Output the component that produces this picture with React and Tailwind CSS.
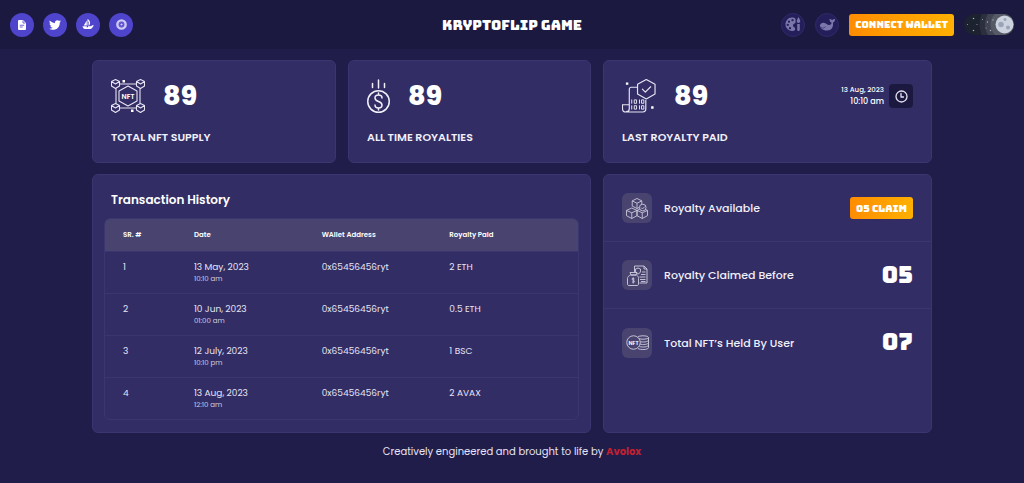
import React from "react";
import { FaTwitter } from "react-icons/fa";

function FileIcon() {
  return (
    <svg viewBox="0 0 16 20" className="h-[10px] w-2" aria-hidden="true">
      <path fill="#fff" d="M2 0h8l6 6v12a2 2 0 0 1-2 2H2a2 2 0 0 1-2-2V2a2 2 0 0 1 2-2z" />
      <path fill="none" stroke="#4f44cc" strokeWidth="1.600" d="M10 1v5h5M3.500 10.500h9M3.500 14h6" />
    </svg>
  );
}

function BoatIcon() {
  return (
    <svg viewBox="0 0 24 22" className="h-[11px] w-3" aria-hidden="true">
      <path fill="#fff" d="M11 0c5 3 7 8 3.500 13H11zM9.500 3v10H3.500zM1 14.500h8.500v2h2.500v-2h5c2 0 2.500-2 6-2.500v2c-2 1-2.500 6-6 6H6c-3 0-5-3-5-7.500z" />
      <path fill="none" stroke="#4f44cc" strokeWidth="1.200" d="M13 5v8" />
    </svg>
  );
}

function RingIcon() {
  return (
    <svg viewBox="0 0 20 20" className="size-[11px]" aria-hidden="true">
      <circle cx="10" cy="10" r="7.500" fill="none" stroke="#cfcaf5" strokeWidth="4.500" />
      <circle cx="10" cy="10" r="4.500" fill="none" stroke="#8f88e0" strokeWidth="1.500" strokeDasharray="2 1.500" />
      <circle cx="10" cy="10" r="2" fill="#d9d5f8" />
    </svg>
  );
}

function PaletteIcon() {
  return (
    <svg viewBox="0 0 32 30" className="h-[15px] w-4" aria-hidden="true">
      <path
        fill="#7c77ab"
        fillRule="evenodd"
        d="M14 1c3 0 5 1 7 2.500V12c-3 1-5 2-5 5 0 3 3 3 4 5s0 6-5 6C7 28 1 22 1 15S6 1 14 1zM8 7a2.300 2.300 0 1 0 0 4.600A2.300 2.300 0 0 0 8 7zM15 4a2.300 2.300 0 1 0 0 4.600A2.300 2.300 0 0 0 15 4zM5.500 13.500a2.300 2.300 0 1 0 0 4.600 2.300 2.300 0 0 0 0-4.600zM10 20a2.300 2.300 0 1 0 0 4.600A2.300 2.300 0 0 0 10 20z"
      />
      <path fill="#7c77ab" d="M27 0c2 4 3.500 6 3.500 8.500a3.500 3.500 0 0 1-7 0C23.500 6 25 4 27 0zM24.500 14h5v11c0 4-5 4-5 0z" />
    </svg>
  );
}

function WhaleIcon() {
  return (
    <svg viewBox="0 0 30 24" className="h-3 w-[15px]" aria-hidden="true">
      <path
        fill="#7c77ab"
        d="M23 7C20 6 19 3 19 0c3 0 4 1 5 3 1-2 3-3 6-3 0 3-1 6-4 7 1 10-3 16-12 16C5 23 0 18 0 12c2-4 6-5 9-4 5 1 6 5 10 4 3-1 4-2 4-5z"
      />
      <path fill="none" stroke="#241f5a" strokeWidth="1.200" d="M2 17c4 2 7 1 9-2" />
    </svg>
  );
}

function SupplyIcon() {
  return (
    <svg viewBox="0 0 68 68" className="size-[34px]" fill="none" stroke="#e6e4f4" strokeWidth="2.200" strokeLinejoin="round" aria-hidden="true">
      <path d="M18 10h32M18 58h32M10 19v30M58 19v30" />
      <path d="M34 14l18 10v20L34 54 16 44V24z" />
      <path d="M9 1l8 4v9l-8 5-8-5V5zM1 5l8 5 8-5" />
      <path d="M59 1l8 4v9l-8 5-8-5V5zM51 5l8 5 8-5" />
      <path d="M9 49l8 4v9l-8 5-8-5v-9zM1 53l8 5 8-5" />
      <path d="M59 49l8 4v9l-8 5-8-5v-9zM51 53l8 5 8-5" />
      <path fill="#fff" stroke="none" d="M23 2h5v5h-5zM40 61h5v5h-5z" />
      <text x="34" y="39" textAnchor="middle" fill="#fff" stroke="none" fontSize="14" fontWeight="600" fontFamily="Poppins, Inter, sans-serif">NFT</text>
    </svg>
  );
}

function CoinIcon() {
  return (
    <svg viewBox="0 0 46 68" className="h-[34px] w-[23px]" fill="none" stroke="#f1f0fa" strokeWidth="3" strokeLinecap="round" aria-hidden="true">
      <circle cx="23" cy="45" r="21.500" />
      <path d="M23 2v16M11 9v8M35 9v8" />
      <path d="M30 38c0-4-3-6-7-6s-7 2-7 6c0 9 14 5 14 14 0 4-3 6-7 6s-7-2-7-6M23 28v4M23 58v4" />
    </svg>
  );
}

function ContractIcon() {
  return (
    <svg viewBox="0 0 70 70" className="size-[34px]" fill="none" stroke="#e6e4f4" strokeWidth="2.400" strokeLinejoin="round" strokeLinecap="round" aria-hidden="true">
      <path d="M50 1l18 10v20L50 41 32 31V11z" />
      <path d="M42 21l6 6 11-11" />
      <path d="M31 17H19a4 4 0 0 0-4 4v32M49 44v18c0 4-2 6-6 6H8c-5 0-7-3-7-8v-7h14v8c0 4-2 6-6 6" />
      <path strokeWidth="2" d="M20 43v7M26 43h4v7h-4zM36 43v7M41 43h4v7h-4zM20 55v7M26 55h4v7h-4zM36 55v7M41 55h4v7h-4z" />
      <path fill="#fff" stroke="none" d="M8 7h5v5H8zM60 56h5v5h-5z" />
    </svg>
  );
}

function ClockIcon() {
  return (
    <svg viewBox="0 0 26 26" className="size-[13px]" fill="none" stroke="#e6e4f4" strokeWidth="2.600" strokeLinecap="round" strokeLinejoin="round" aria-hidden="true">
      <circle cx="13" cy="13" r="11" />
      <path d="M12 7v7h5" />
    </svg>
  );
}

function BoxesIcon() {
  return (
    <svg viewBox="0 0 46 44" className="h-[21px] w-[22px]" fill="none" stroke="#cfcde0" strokeWidth="1.800" strokeLinejoin="round" aria-hidden="true">
      <path d="M23 1l10 5v11l-10 5-10-5V6zM13 6l10 5 10-5M23 11v11" />
      <path d="M12 21l11 5v11l-11 6-11-6V26zM1 26l11 5 11-5M12 31v12" />
      <path d="M34 21l11 5v11l-11 6-11-6V26zM23 26l11 5 11-5M34 31v12" />
      <circle cx="35" cy="20" r="7" fill="#48446f" />
      <path d="M31.500 20l3 3 5-5" />
    </svg>
  );
}

function MoneyBagIcon() {
  return (
    <svg viewBox="0 0 42 42" className="size-[21px]" fill="none" stroke="#cfcde0" strokeWidth="1.800" strokeLinejoin="round" aria-hidden="true">
      <path d="M15 15V2h19l6 6v28H25M34 2v6h6" />
      <path d="M22 6l5 2v4c0 3-2 5-5 6-3-1-5-3-5-6V8z" />
      <path d="M30 14h7M28 19h9M25 24h12M26 29h11M28 33h9" />
      <path fill="#48446f" d="M7 20h12c3 2 4 4 4 7v11c0 2-1 3-3 3H4c-2 0-3-1-3-3V27c0-3 2-5 6-7zM6 15h14l-2 5H8z" />
      <path d="M15 28c-1-2-5-2-5 0 0 3 5 2 5 5 0 2-4 2-5 0M12.500 25v12" />
    </svg>
  );
}

function CoinStackIcon() {
  return (
    <svg viewBox="0 0 46 30" className="h-[15px] w-[23px]" fill="none" stroke="#cfcde0" strokeWidth="1.800" strokeLinejoin="round" aria-hidden="true">
      <ellipse cx="34" cy="5" rx="11" ry="3.500" />
      <path d="M45 5v20c0 5-17 5-21 2M45 10c0 4-12 5-18 3M45 15c0 4-12 5-17 3M45 20c0 4-12 5-18 3M23 5v2" />
      <circle cx="15" cy="15" r="13.500" fill="#48446f" />
      <text x="15" y="19" textAnchor="middle" fill="#fff" stroke="none" fontSize="11" fontWeight="600" fontFamily="Poppins, Inter, sans-serif">NFT</text>
    </svg>
  );
}

function MoonToggle() {
  return (
    <label className="block cursor-pointer">
      <input type="checkbox" role="switch" defaultChecked aria-label="Night mode" className="sr-only" />
      <svg viewBox="0 0 100 42" className="h-[21px] w-[50px]" aria-hidden="true">
        <defs>
          <clipPath id="track"><rect width="100" height="42" rx="21" /></clipPath>
        </defs>
        <g clipPath="url(#track)">
          <rect width="100" height="42" fill="#1c2230" />
          <circle cx="81" cy="21" r="50" fill="#2c303e" />
          <circle cx="81" cy="21" r="39" fill="#414553" />
          <circle cx="81" cy="21" r="28" fill="#565a67" />
          <g fill="#aab0bd">
            <circle cx="19" cy="9" r="1.500" /><circle cx="19" cy="33" r="1.500" />
            <circle cx="37" cy="11" r="1" /><circle cx="26" cy="21" r="1" />
            <circle cx="47" cy="16" r="1.400" /><circle cx="44" cy="28" r="1" />
            <circle cx="53" cy="33" r="1.500" /><circle cx="58" cy="12" r="1.300" />
            <circle cx="7" cy="21" r="1" />
          </g>
        </g>
        <circle cx="81" cy="21" r="18" fill="#ccd3df" />
        <g fill="#9aa3b8">
          <circle cx="74" cy="21" r="5.500" /><circle cx="88" cy="27" r="4" /><circle cx="82" cy="11" r="3" />
        </g>
      </svg>
    </label>
  );
}

const socials = [
  { label: "Docs", icon: <FileIcon /> },
  { label: "Twitter", icon: <FaTwitter className="size-3" aria-hidden="true" /> },
  { label: "OpenSea", icon: <BoatIcon /> },
  { label: "Marketplace", icon: <RingIcon /> },
];

const transactions = [
  { id: 1, date: "13 May, 2023", time: "10:10 am", wallet: "0x65456456ryt", paid: "2 ETH" },
  { id: 2, date: "10 Jun, 2023", time: "01:00 am", wallet: "0x65456456ryt", paid: "0.5 ETH" },
  { id: 3, date: "12 July, 2023", time: "10:10 pm", wallet: "0x65456456ryt", paid: "1 BSC" },
  { id: 4, date: "13 Aug, 2023", time: "12:10 am", wallet: "0x65456456ryt", paid: "2 AVAX" },
];

const card = "rounded-md border border-[#3b366f] bg-[#322d64]";
const display = "font-['Bungee','Poppins','Inter',sans-serif] font-normal";
const orange = `${display} h-[22px] cursor-pointer rounded-[3px] bg-linear-to-r from-[#ff8c00] to-[#ffb000] px-1.5 text-[10px] text-white whitespace-nowrap`;

function StatCard({ icon, value, label, children }) {
  return (
    <section className={`${card} px-[18px] pt-[18px] pb-[17px]`}>
      <div className="flex h-[34px] items-center gap-[18px]">
        {icon}
        <span className="text-[27px] leading-[34px] font-extrabold">{value}</span>
        {children}
      </div>
      <h2 className="mt-4 text-[11px] leading-4 font-semibold text-[#f1f0fa]">{label}</h2>
    </section>
  );
}

function RoyaltyRow({ icon, label, children }) {
  return (
    <li className="flex h-[67px] items-center gap-3 border-b border-[#3b366f] px-[18px] last:border-b-0">
      <span className="flex size-[30px] shrink-0 items-center justify-center rounded-md bg-[#48446f]">{icon}</span>
      <span className="flex-1 text-[11px] leading-4 font-medium text-[#f1f0fa]">{label}</span>
      {children}
    </li>
  );
}

export default function App() {
  return (
    <div className="min-h-screen bg-[#211d4b] font-['Poppins','Inter',sans-serif] text-white">
      <header className="grid h-[49px] grid-cols-[1fr_auto_1fr] items-center bg-[#1c1940] px-[10px]">
        <nav className="flex gap-[9px]">
          {socials.map((s) => (
            <a key={s.label} href="#" aria-label={s.label} className="flex size-6 items-center justify-center rounded-full bg-[#4f44cc]">
              {s.icon}
            </a>
          ))}
        </nav>
        <h1 className={`${display} text-sm leading-6`}>KRYPTOFLIP GAME</h1>
        <div className="flex items-center justify-end gap-[10px]">
          <button type="button" aria-label="Art" className="flex size-6 cursor-pointer items-center justify-center rounded-full border border-[#2f2a66] bg-[#241f5a]">
            <PaletteIcon />
          </button>
          <button type="button" aria-label="Whales" className="flex size-6 cursor-pointer items-center justify-center rounded-full border border-[#2f2a66] bg-[#241f5a]">
            <WhaleIcon />
          </button>
          <button type="button" className={orange}>CONNECT WALLET</button>
          <MoonToggle />
        </div>
      </header>

      <main className="mx-auto grid max-w-[840px] grid-cols-[244fr_243fr_329fr] gap-x-3 gap-y-[11px] pt-[11px]">
        <StatCard icon={<SupplyIcon />} value="89" label="TOTAL NFT SUPPLY" />
        <StatCard icon={<CoinIcon />} value="89" label="ALL TIME ROYALTIES" />
        <StatCard icon={<ContractIcon />} value="89" label="LAST ROYALTY PAID">
          <div className="ml-auto flex items-center gap-[5px]">
            <p className="text-right font-medium">
              <span className="block text-[7px] leading-3">13 Aug, 2023</span>
              <span className="block text-[8px] leading-3">10:10 am</span>
            </p>
            <span className="flex size-6 items-center justify-center rounded bg-[#1c1940]"><ClockIcon /></span>
          </div>
        </StatCard>

        <section className={`${card} col-span-2 px-[11px] pt-[15px] pb-3`}>
          <h2 className="mb-2 pl-[7px] text-xs leading-5 font-semibold">Transaction History</h2>
          <div className="overflow-hidden rounded-md border border-[#3b366f]">
            <table className="w-full table-fixed border-separate border-spacing-0 text-left">
              <thead>
                <tr className="h-8 bg-[#48446f] text-[7px]">
                  <th className="w-[15%] pl-[18px] font-semibold">SR. #</th>
                  <th className="w-[27%] pl-[18px] font-semibold">Date</th>
                  <th className="w-[27%] pl-[18px] font-semibold">WAllet Address</th>
                  <th className="w-[31%] pl-[18px] font-semibold">Royalty Paid</th>
                </tr>
              </thead>
              <tbody className="[&_td]:border-t [&_td]:border-[#3b366f] [&_td]:pt-[9px] [&_td]:pb-[10px] [&_td]:pl-[18px] [&_td]:align-top">
                {transactions.map((t) => (
                  <tr key={t.id} className="text-[9px] leading-[13px] text-[#e6e4f4]">
                    <td>{t.id}</td>
                    <td>
                      {t.date}
                      <span className="block text-[7px] leading-[9px] text-[#cfcde0]">{t.time}</span>
                    </td>
                    <td>{t.wallet}</td>
                    <td>{t.paid}</td>
                  </tr>
                ))}
              </tbody>
            </table>
          </div>
        </section>

        <section className={card}>
          <ul>
            <RoyaltyRow icon={<BoxesIcon />} label="Royalty Available">
              <button type="button" className={orange}>05 CLAIM</button>
            </RoyaltyRow>
            <RoyaltyRow icon={<MoneyBagIcon />} label="Royalty Claimed Before">
              <span className={`${display} text-[23px]`}>05</span>
            </RoyaltyRow>
            <RoyaltyRow icon={<CoinStackIcon />} label="Total NFT’s Held By User">
              <span className={`${display} text-[23px]`}>07</span>
            </RoyaltyRow>
          </ul>
        </section>
      </main>

      <footer className="py-[11px] text-center text-[10px] leading-4 text-[#e6e4f4]">
        Creatively engineered and brought to life by{" "}
        <a href="#" className="font-bold text-[#c4202f]">Avolox</a>
      </footer>
    </div>
  );
}
